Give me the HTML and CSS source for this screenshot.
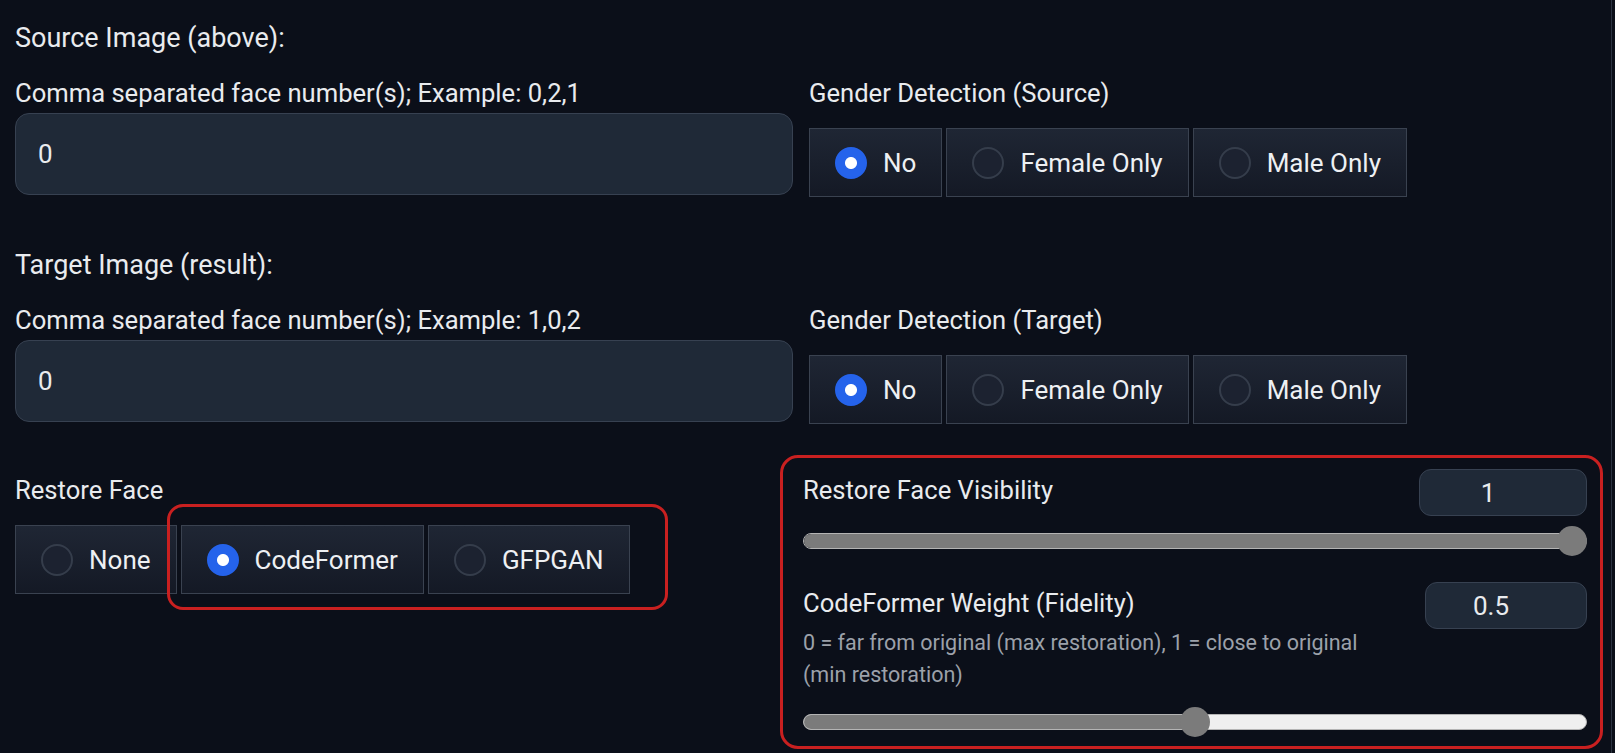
FILE: index.html
```html
<!DOCTYPE html>
<html lang="en">
<head>
<meta charset="utf-8">
<title>Face swap options</title>
<link rel="stylesheet" href="styles.css">
</head>
<body>
<div class="page">
  <section class="group">
    <p class="title">Source Image (above):</p>
    <div class="row">
      <div class="col">
        <div class="label">Comma separated face number(s); Example: 0,2,1</div>
        <div class="textbox">0</div>
      </div>
      <div class="col">
        <div class="label">Gender Detection (Source)</div>
        <div class="radio-group">
          <div class="radio-item"><span class="radio checked"></span><span>No</span></div>
          <div class="radio-item"><span class="radio"></span><span>Female Only</span></div>
          <div class="radio-item"><span class="radio"></span><span>Male Only</span></div>
        </div>
      </div>
    </div>
  </section>

  <section class="group group-second">
    <p class="title">Target Image (result):</p>
    <div class="row">
      <div class="col">
        <div class="label">Comma separated face number(s); Example: 1,0,2</div>
        <div class="textbox">0</div>
      </div>
      <div class="col">
        <div class="label">Gender Detection (Target)</div>
        <div class="radio-group">
          <div class="radio-item"><span class="radio checked"></span><span>No</span></div>
          <div class="radio-item"><span class="radio"></span><span>Female Only</span></div>
          <div class="radio-item"><span class="radio"></span><span>Male Only</span></div>
        </div>
      </div>
    </div>
  </section>

  <section class="bottom-row">
    <div class="restore-col">
      <div class="label">Restore Face</div>
      <div class="radio-group restore-group">
        <div class="radio-item"><span class="radio"></span><span>None</span></div>
        <div class="radio-item"><span class="radio checked"></span><span>CodeFormer</span></div>
        <div class="radio-item"><span class="radio"></span><span>GFPGAN</span></div>
        <div class="highlight"></div>
      </div>
    </div>
    <div class="panel">
      <div class="slider-head">
        <div class="slider-text"><div class="label slider-title">Restore Face Visibility</div></div>
        <div class="number number-one">1</div>
      </div>
      <div class="slider">
        <div class="track"><div class="fill" style="width:100%"></div></div>
        <div class="thumb" style="left:calc(100% - 30px)"></div>
      </div>
      <div class="slider-head slider-head-second">
        <div class="slider-text">
          <div class="label slider-title">CodeFormer Weight (Fidelity)</div>
          <div class="info">0 = far from original (max restoration), 1 = close to original (min restoration)</div>
        </div>
        <div class="number number-two">0.5</div>
      </div>
      <div class="slider slider-second">
        <div class="track"><div class="fill" style="width:50%"></div></div>
        <div class="thumb" style="left:calc(50% - 15px)"></div>
      </div>
    </div>
  </section>
</div>
</body>
</html>
```

FILE: styles.css
```css
* { box-sizing: border-box; }

html, body {
  margin: 0;
  padding: 0;
  background: #0b0f19;
}

body {
  font-family: Roboto, "Noto Sans", sans-serif;
  color: #e9ebee;
  font-size: 26px;
}

.page {
  width: 1612px;
  min-height: 753px;
  padding: 23px 0 0 15px;
  border-right: 1px solid #2c3341;
}

.title {
  margin: 0;
  height: 30px;
  line-height: 30px;
  font-size: 27px;
}

.group-second { margin-top: 53px; }

.row {
  margin-top: 25px;
  display: grid;
  grid-template-columns: 778px 1fr;
  column-gap: 16px;
  align-items: start;
}

.col { display: flex; flex-direction: column; }

.label {
  height: 30px;
  line-height: 30px;
  font-size: 25.6px;
  white-space: nowrap;
}

.textbox {
  margin-top: 5px;
  height: 82px;
  background: #1f2937;
  border: 1px solid #374151;
  border-radius: 14px;
  padding: 0 22px;
  display: flex;
  align-items: center;
  font-size: 26px;
}

.radio-group {
  margin-top: 20px;
  display: flex;
  gap: 4px;
  position: relative;
}

.radio-item {
  height: 69px;
  display: flex;
  align-items: center;
  gap: 16px;
  padding: 0 25px 0 25px;
  border: 1px solid #3a4250;
  background: linear-gradient(180deg, #1f2634 0%, #141925 100%);
  font-size: 26px;
  color: #eef0f3;
  white-space: nowrap;
}

.radio {
  width: 32px;
  height: 32px;
  flex: none;
  border-radius: 50%;
  border: 2px solid #353d4b;
  background: #1c2230;
}

.radio.checked {
  border-color: #2563eb;
  background: radial-gradient(circle, #ffffff 0 5.5px, #2563eb 6.5px);
}

.bottom-row {
  margin-top: 31px;
  display: flex;
  gap: 16px;
}

.restore-col {
  width: 749px;
  padding-top: 20px;
}

.highlight {
  position: absolute;
  left: 152px;
  top: -21px;
  width: 501px;
  height: 106px;
  border: 3px solid #c92020;
  border-radius: 16px;
  pointer-events: none;
}

.panel {
  width: 823px;
  height: 294px;
  border: 3px solid #c92020;
  border-radius: 18px;
  padding: 11px 13px 0 20px;
}

.slider-head {
  display: flex;
  justify-content: space-between;
  align-items: flex-start;
  gap: 20px;
}

.slider-text { flex: 1; min-width: 0; }

.slider-title { margin-top: 6px; }

.number {
  flex: none;
  background: #1f2937;
  border: 1px solid #374151;
  border-radius: 12px;
  display: flex;
  align-items: center;
  justify-content: center;
  padding-right: 30px;
  font-size: 26px;
}

.number-one { width: 168px; height: 47px; }
.number-two { width: 162px; height: 47px; }

.slider-head-second { margin-top: 26px; }

.info {
  margin-top: 9px;
  font-size: 21.5px;
  line-height: 32px;
  color: #9ca1aa;
  max-width: 580px;
}

.slider {
  position: relative;
  height: 30px;
  margin-top: 10px;
  display: flex;
  align-items: center;
}

.slider-second { margin-top: 16px; }

.track {
  width: 100%;
  height: 16px;
  border-radius: 8px;
  background: #efefef;
  border: 1px solid #b4b4b4;
  overflow: hidden;
}

.fill {
  height: 100%;
  background: #7b7b7b;
}

.thumb {
  position: absolute;
  top: 0;
  width: 30px;
  height: 30px;
  border-radius: 50%;
  background: #7b7b7b;
}
```
